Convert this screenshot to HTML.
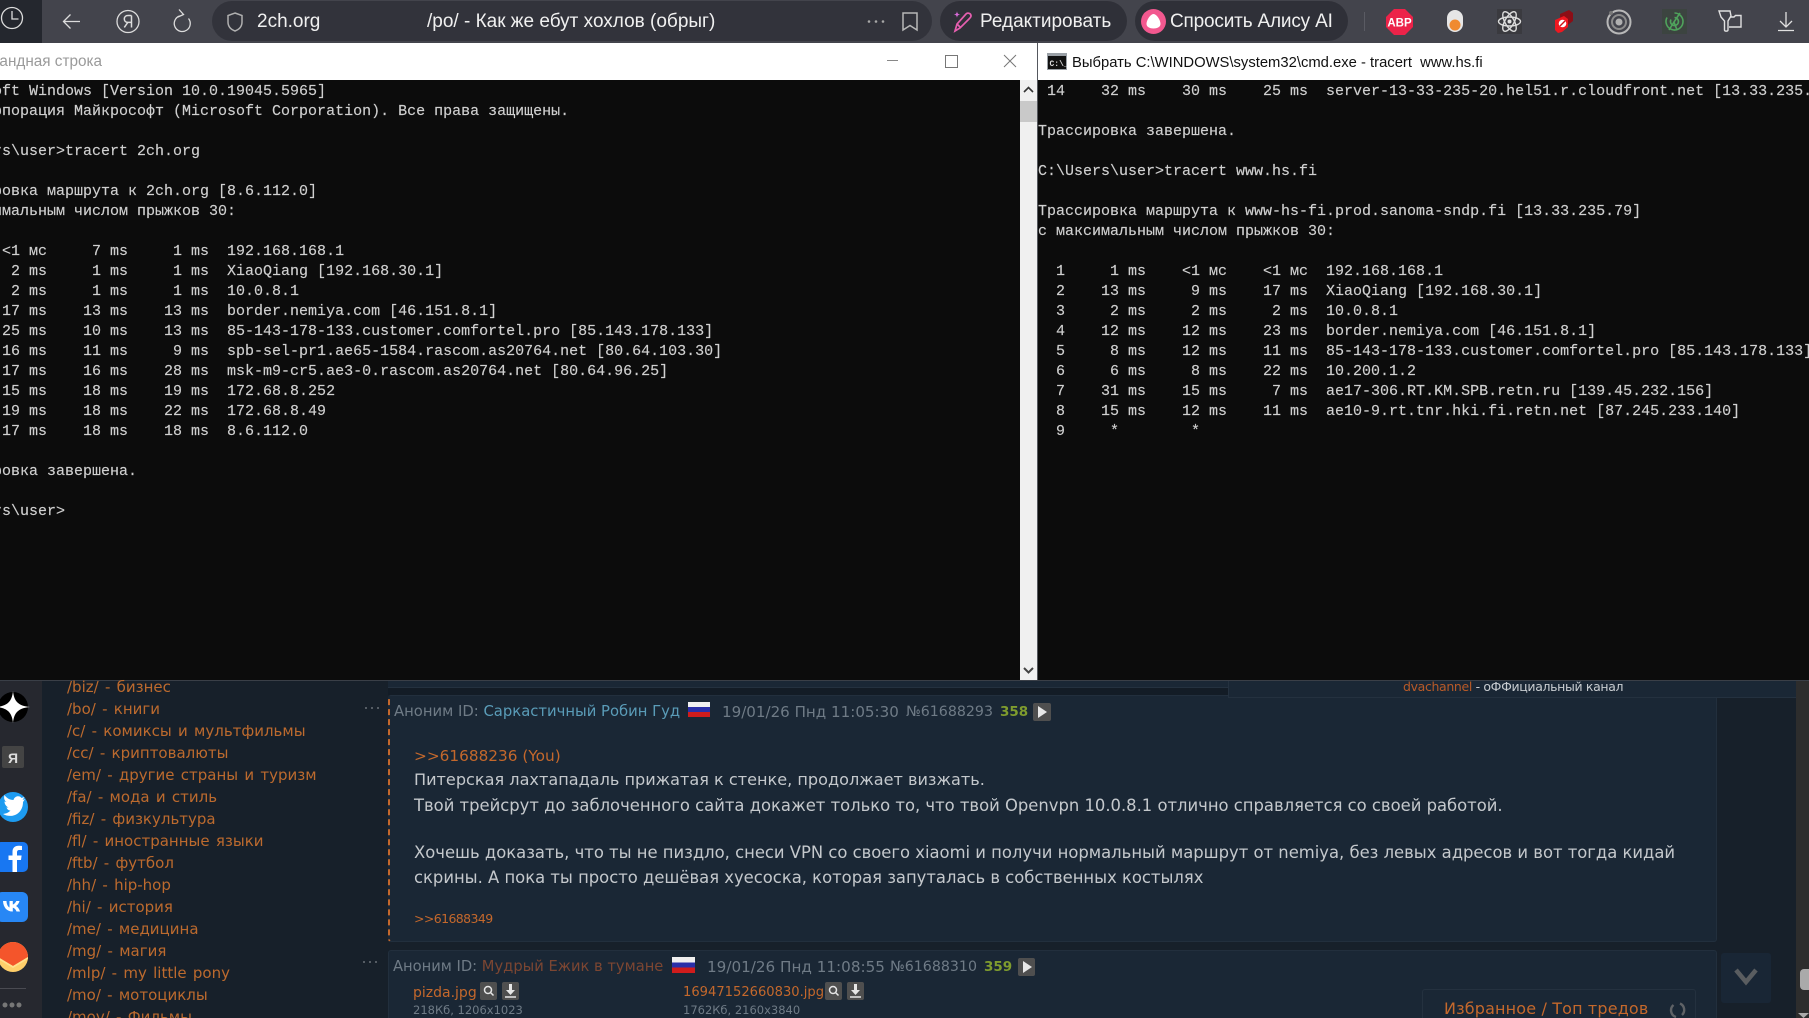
<!DOCTYPE html>
<html lang="ru"><head><meta charset="utf-8"><title>2ch</title>
<style>
html,body{margin:0;padding:0;width:1809px;height:1018px;overflow:hidden;background:#000}
#root{position:relative;width:1809px;height:1018px;overflow:hidden}
.a{position:absolute}
.t{position:absolute;white-space:pre;line-height:20px;height:20px}
#top{position:absolute;left:0;top:0;width:1809px;height:43px;background:#43444c;overflow:hidden}
.ui{font-family:"Liberation Sans",sans-serif;color:#f0f0f0;font-size:19px}
.con{position:absolute;top:2px;margin:0;font:15px/20px "Liberation Mono",monospace;color:#d0d0d0;white-space:pre;-webkit-text-stroke:.15px #d0d0d0}
.b{font-family:"DejaVu Sans",sans-serif;font-size:15px;color:#bc6a2e;word-spacing:1.5px}
.h{font-family:"DejaVu Sans",sans-serif;font-size:14.8px;color:#6f7b86}
.m{font-family:"DejaVu Sans",sans-serif;font-size:16.4px;color:#c4c8cc}
.post{position:absolute;left:388px;width:1329px;background:#1a2735;border:1px solid #222f3d;border-radius:3px;box-sizing:border-box}
.pb{position:absolute;background:#4f4f4f;border-radius:2px}
</style></head><body><div id="root">

<!-- browser bar -->
<div id="top">
 <div class="a" style="left:0;top:0;width:42px;height:43px;background:#24272e"></div>
 <svg class="a" style="left:0;top:0" width="212" height="43" fill="none" stroke="#dcdcdc" stroke-width="1.300">
  <circle cx="12" cy="18" r="10.500"/><path d="M12 11v8h6.500"/>
  <path d="M80 21.500H63.500m7-7l-7 7 7 7"/>
  <circle cx="128" cy="21.500" r="11"/><path d="M131.500 15.500v12m0-12h-3.500c-2.300 0-3.700 1.500-3.700 3.500s1.400 3.400 3.700 3.400h3.500m-3.700 0l-3.500 5" stroke-width="1.500"/>
  <path d="M188.500 18.500a8 8 0 1 1-9-2.500M179 9.500l4.500 5-5.500 2.500"/>
 </svg>
 <div class="a" style="left:212px;top:1px;width:720px;height:40px;border-radius:20px;background:#32333b"></div>
 <svg class="a" style="left:226px;top:11px" width="18" height="22" fill="none" stroke="#b0b0b0" stroke-width="1.500"><path d="M9 2l7 2.500v6.500c0 4.500-3 7.500-7 9-4-1.500-7-4.500-7-9V4.500z"/></svg>
 <div class="t ui" style="left:257px;top:12px">2ch.org</div>
 <div class="t ui" style="left:427px;top:12px">/po/ - Как же ебут хохлов (обрыг)</div>
 <svg class="a" style="left:866px;top:11px" width="56" height="24" fill="none" stroke="#b8b8b8" stroke-width="1.500"><circle cx="3" cy="10.500" r="1.300" fill="#a8a8a8" stroke="none"/><circle cx="10" cy="10.500" r="1.300" fill="#a8a8a8" stroke="none"/><circle cx="17" cy="10.500" r="1.300" fill="#a8a8a8" stroke="none"/><path d="M37 2h14v17l-7-4.500-7 4.500z"/></svg>
 <div class="a" style="left:940px;top:1px;width:187px;height:40px;border-radius:20px;background:#2f3038"></div>
 <svg class="a" style="left:951px;top:9px" width="24" height="26" fill="none" stroke="#e65fb0" stroke-width="1.700"><path d="M4 22l2-7L15 5c1.500-1.500 5-1 5 2 0 1-1 2-2 3l-9 9z"/><path d="M6 15l3 3"/><path d="M6 2c.3 2.500 1 3.300 3.500 3.500C7 5.800 6.300 6.500 6 9 5.700 6.500 5 5.800 2.500 5.500 5 5.300 5.700 4.500 6 2z" fill="#d86ad8" stroke="none"/></svg>
 <div class="t ui" style="left:980px;top:12px">Редактировать</div>
 <div class="a" style="left:1135px;top:1px;width:213px;height:40px;border-radius:20px;background:#2f3038"></div>
 <div class="a" style="left:1141px;top:9px;width:25px;height:25px;border-radius:50%;background:#f2588f"></div>
 <svg class="a" style="left:1145px;top:13px" width="17" height="17"><path d="M8.500 1c3 0 7 6 7 10 0 3-3.500 4.500-7 4.500s-7-1.500-7-4.500c0-4 4-10 7-10z" fill="#fff"/></svg>
 <div class="t ui" style="left:1170px;top:12px;letter-spacing:-.18px">Спросить Алису AI</div>
 <div class="a" style="left:1364px;top:12px;width:1px;height:19px;background:#5a5b63"></div>
 <svg class="a" style="left:1386px;top:9px" width="27" height="26"><path d="M8 0h11l8 8v10l-8 8H8l-8-8V8z" fill="#ec2349"/><text x="13.500" y="17.500" text-anchor="middle" font-family="Liberation Sans" font-weight="700" font-size="11.500" fill="#fff">ABP</text></svg>
 <svg class="a" style="left:1445px;top:9px" width="20" height="24"><rect x="2" y="1" width="16" height="22" rx="8" fill="#e6e6e6"/><circle cx="10" cy="16" r="5.500" fill="#f08a30"/></svg>
 <svg class="a" style="left:1497px;top:9px" width="25" height="25"><rect width="25" height="25" fill="#3a3a3f"/><g fill="none" stroke="#dcdcdc" stroke-width="1.400"><ellipse cx="12.500" cy="12.500" rx="11" ry="4.500"/><ellipse cx="12.500" cy="12.500" rx="11" ry="4.500" transform="rotate(60 12.500 12.500)"/><ellipse cx="12.500" cy="12.500" rx="11" ry="4.500" transform="rotate(120 12.500 12.500)"/></g><circle cx="12.500" cy="12.500" r="2" fill="#e0e0e0"/></svg>
 <svg class="a" style="left:1554px;top:9px" width="20" height="25"><path d="M6 5l9-4 4 3v8l-8 6-5-3z" fill="#8c0e16"/><path d="M1 11l9-4 4 3v8l-6 5-4 1-3-3z" fill="#ef1820"/><circle cx="8.500" cy="14.500" r="3.800" fill="#fff"/><path d="M6 17l5-5" stroke="#d01018" stroke-width="1.400"/></svg>
 <svg class="a" style="left:1606px;top:9px" width="26" height="26" fill="none"><circle cx="13" cy="13" r="11.500" stroke="#b8b8b8" stroke-width="2"/><circle cx="13" cy="13" r="7" stroke="#8c8c8c" stroke-width="2"/><circle cx="13" cy="13" r="3.500" fill="#b0b0b0"/><circle cx="5" cy="4" r="2" fill="#777"/></svg>
 <svg class="a" style="left:1662px;top:9px" width="25" height="25" fill="none"><rect width="25" height="25" fill="#3c4440"/><path d="M12.500 4a8.500 8.500 0 1 1-7.500 4.500M12.500 8.500a4 4 0 1 1-3.500 2M18 4l-6 9 3 8M7 21l5-8" stroke="#4fa35c" stroke-width="1.600"/></svg>
 <svg class="a" style="left:1717px;top:9px" width="26" height="26" fill="none" stroke="#e0e0e0" stroke-width="1.400"><path d="M2 2h11l1 5-3 5v9c0 1.500-3.500 1.500-3.500 0v-9L4 8z"/><path d="M13 8h4l1.500-1.500H24v11.500H12"/></svg>
 <svg class="a" style="left:1776px;top:10px" width="20" height="24" fill="none" stroke="#e0e0e0" stroke-width="1.300"><path d="M10 2v15M4 11l6 6 6-6M2 20.500h16"/></svg>
</div>
<div class="a" style="left:0;top:43px;width:1809px;height:1px;background:#26272c"></div>

<!-- left console -->
<div class="a" style="left:0;top:43px;width:1038px;height:37px;background:#fff"></div>
<div class="t" style="left:-28.500px;top:52px;font:15.300px/20px 'Liberation Sans',sans-serif;color:#9a9a9a">Командная строка</div>
<div class="a" style="left:887px;top:60px;width:11px;height:1px;background:#888"></div>
<div class="a" style="left:945px;top:55px;width:11px;height:11px;border:1px solid #777"></div>
<svg class="a" style="left:1003px;top:54px" width="14" height="14" stroke="#777" stroke-width="1"><path d="M1 1l12 12M13 1L1 13"/></svg>
<div class="a" style="left:0;top:80px;width:1020px;height:600px;background:#0c0c0c;overflow:hidden">
<pre class="con" style="left:-61px">Microsoft Windows [Version 10.0.19045.5965]
(c) Корпорация Майкрософт (Microsoft Corporation). Все права защищены.

C:\Users\user&gt;tracert 2ch.org

Трассировка маршрута к 2ch.org [8.6.112.0]
с максимальным числом прыжков 30:

  1    &lt;1 мс     7 ms     1 ms  192.168.168.1
  2     2 ms     1 ms     1 ms  XiaoQiang [192.168.30.1]
  3     2 ms     1 ms     1 ms  10.0.8.1
  4    17 ms    13 ms    13 ms  border.nemiya.com [46.151.8.1]
  5    25 ms    10 ms    13 ms  85-143-178-133.customer.comfortel.pro [85.143.178.133]
  6    16 ms    11 ms     9 ms  spb-sel-pr1.ae65-1584.rascom.as20764.net [80.64.103.30]
  7    17 ms    16 ms    28 ms  msk-m9-cr5.ae3-0.rascom.as20764.net [80.64.96.25]
  8    15 ms    18 ms    19 ms  172.68.8.252
  9    19 ms    18 ms    22 ms  172.68.8.49
 10    17 ms    18 ms    18 ms  8.6.112.0

Трассировка завершена.

C:\Users\user&gt;</pre>
</div>
<!-- scrollbar -->
<div class="a" style="left:1020px;top:80px;width:17px;height:600px;background:#f0f0f0"></div>
<div class="a" style="left:1020px;top:101px;width:17px;height:21px;background:#c9c9c9"></div>
<svg class="a" style="left:1020px;top:82px" width="17" height="16" fill="none" stroke="#333" stroke-width="1.600"><path d="M4 10l4.500-4.500L13 10"/></svg>
<svg class="a" style="left:1020px;top:662px" width="17" height="16" fill="none" stroke="#444" stroke-width="2"><path d="M4 6l4.500 4.500L13 6"/></svg>

<!-- right console -->
<div class="a" style="left:1037px;top:43px;width:1px;height:637px;background:#55585e"></div>
<div class="a" style="left:1038px;top:43px;width:771px;height:37px;background:#fff"></div>
<svg class="a" style="left:1047px;top:53px" width="20" height="17"><rect width="20" height="17" fill="#9aa0a6"/><rect x="1" y="3" width="18" height="13" fill="#111"/><text x="2.500" y="13" font-family="Liberation Mono" font-size="8" font-weight="700" fill="#ddd">C:\_</text></svg>
<div class="t" style="left:1072px;top:52.500px;font:14.800px/20px 'Liberation Sans',sans-serif;color:#111">Выбрать C:\WINDOWS\system32\cmd.exe - tracert  www.hs.fi</div>
<div class="a" style="left:1038px;top:80px;width:771px;height:600px;background:#0c0c0c;overflow:hidden">
<pre class="con" style="left:0"> 14    32 ms    30 ms    25 ms  server-13-33-235-20.hel51.r.cloudfront.net [13.33.235.20]

Трассировка завершена.

C:\Users\user&gt;tracert www.hs.fi

Трассировка маршрута к www-hs-fi.prod.sanoma-sndp.fi [13.33.235.79]
с максимальным числом прыжков 30:

  1     1 ms    &lt;1 мс    &lt;1 мс  192.168.168.1
  2    13 ms     9 ms    17 ms  XiaoQiang [192.168.30.1]
  3     2 ms     2 ms     2 ms  10.0.8.1
  4    12 ms    12 ms    23 ms  border.nemiya.com [46.151.8.1]
  5     8 ms    12 ms    11 ms  85-143-178-133.customer.comfortel.pro [85.143.178.133]
  6     6 ms     8 ms    22 ms  10.200.1.2
  7    31 ms    15 ms     7 ms  ae17-306.RT.KM.SPB.retn.ru [139.45.232.156]
  8    15 ms    12 ms    11 ms  ae10-9.rt.tnr.hki.fi.retn.net [87.245.233.140]
  9     *        *</pre>
</div>

<!-- bottom page -->
<div class="a" style="left:0;top:680px;width:1809px;height:338px;background:#17202a;overflow:hidden">
 <div class="a" style="left:0;top:0;width:1809px;height:1px;background:#3a3f47"></div>
</div>
<div class="a" style="left:0;top:681px;width:42px;height:337px;background:#26282f"></div>
<svg class="a" style="left:0;top:681px" width="42" height="337">
 <circle cx="13" cy="26" r="15" fill="#000"/><path d="M13 10c1 10 5 15 17 16-12 1-16 6-17 16-1-10-5-15-17-16 12-1 16-6 17-16z" fill="#fff"/>
 <rect x="2" y="65" width="22" height="22" rx="2" fill="#444"/><text x="13" y="82" text-anchor="middle" font-family="Liberation Sans" font-size="14" font-weight="700" fill="#ddd">Я</text>
 <circle cx="13" cy="126" r="15" fill="#1d9bf0"/><path d="M3 133c9 5 20 0 20-12l2-3-2.500 1 2-3-3 1c-2-3-7-2-8 2-4 0-7-2-9-5-1 3 0 6 2 7l-2-.5c0 3 2 5 4 6h-2c1 2 2 3 4 3-2 2-4 3-7.500 3.500z" fill="#fff"/>
 <rect x="-4" y="161" width="32" height="30" rx="5" fill="#1877f2"/><path d="M17 191v-12h4l.6-4.500H17v-3c0-1.500.5-2.500 2.500-2.500H22v-4c-.6 0-2-.2-3.500-.2-3.500 0-6 2-6 6v3.700H8.500V179H12.500v12z" fill="#fff"/>
 <rect x="-4" y="211" width="32" height="30" rx="6" fill="#2787f5"/><path d="M3 220h3.500c.1 4 2 6 3 6.500V220h3.300v3.500c1-.1 2.500-1.500 3.500-3.500h3.200c-.5 2.500-2.500 4.500-3.500 5 1 .5 3 2 4 5.500h-3.500c-.7-2-2.200-3.500-3.700-3.700v3.700h-.4C7 230.500 3.300 226.500 3 220z" fill="#fff"/>
 <circle cx="13" cy="276" r="15" fill="#ffcf6a"/><path d="M-2 276a15 15 0 0 1 30 0l-15 9z" fill="#f4552b"/><path d="M-2 276l15 9 15-9v2l-15 9-15-9z" fill="#ffe08c"/>
 <rect x="0" y="307" width="26" height="1" fill="#4a4b52"/>
 <circle cx="5" cy="324" r="2.500" fill="#777"/><circle cx="12" cy="324" r="2.500" fill="#777"/><circle cx="19" cy="324" r="2.500" fill="#777"/>
</svg>

<!-- board list -->
<div class="t b" style="left:67px;top:677px">/biz/ - бизнес</div>
<div class="t b" style="left:67px;top:699px">/bo/ - книги</div>
<div class="t b" style="left:67px;top:721px">/c/ - комиксы и мультфильмы</div>
<div class="t b" style="left:67px;top:743px">/cc/ - криптовалюты</div>
<div class="t b" style="left:67px;top:765px">/em/ - другие страны и туризм</div>
<div class="t b" style="left:67px;top:787px">/fa/ - мода и стиль</div>
<div class="t b" style="left:67px;top:809px">/fiz/ - физкультура</div>
<div class="t b" style="left:67px;top:831px">/fl/ - иностранные языки</div>
<div class="t b" style="left:67px;top:853px">/ftb/ - футбол</div>
<div class="t b" style="left:67px;top:875px">/hh/ - hip-hop</div>
<div class="t b" style="left:67px;top:897px">/hi/ - история</div>
<div class="t b" style="left:67px;top:919px">/me/ - медицина</div>
<div class="t b" style="left:67px;top:941px">/mg/ - магия</div>
<div class="t b" style="left:67px;top:963px">/mlp/ - my little pony</div>
<div class="t b" style="left:67px;top:985px">/mo/ - мотоциклы</div>
<div class="t b" style="left:67px;top:1007px">/mov/ - Фильмы</div>

<!-- top strip -->
<div class="a" style="left:388px;top:681px;width:841px;height:6px;background:#1a2735;border-bottom:1px solid #24313f"></div>
<div class="a" style="left:388px;top:688px;width:841px;height:7px;background:#131c26"></div>
<div class="a" style="left:1228px;top:681px;width:568px;height:17px;background:#1a2735;border-left:1px solid #24313f;border-bottom:1px solid #24313f;box-sizing:border-box;z-index:3"></div>
<div class="t" style="left:1403px;top:677px;font:12.500px/20px 'DejaVu Sans',sans-serif;color:#b85a28;z-index:4;letter-spacing:-.35px">dvachannel <span style="color:#c8ccd0">- оФФициальный канал</span></div>

<!-- post 1 -->
<div class="post" style="top:695px;height:247px;border-left:2px dashed #c4682c"></div>
<div class="a" style="left:365px;top:707px;width:16px;height:2px;background:repeating-linear-gradient(90deg,#555c64 0 2px,transparent 2px 6px)"></div>
<div class="t h" style="left:394px;top:702px">Аноним ID: <span style="color:#5a9cb8">Саркастичный Робин Гуд</span></div>
<div class="a" style="left:688px;top:702px;width:22px;height:15px;background:linear-gradient(#f0f0f0 0 33%,#2a2fa8 33% 66%,#d01c1c 66%)"></div>
<div class="t h" style="left:722px;top:702px;font-size:15.100px">19/01/26 Пнд 11:05:30</div>
<div class="t h" style="left:906px;top:702px;font-size:14.200px">№61688293</div>
<div class="t h" style="left:1000px;top:702px;color:#7f9c2e;font-size:13.500px;font-weight:700">358</div>
<div class="pb" style="left:1033px;top:703px;width:18px;height:18px"></div>
<svg class="a" style="left:1033px;top:703px" width="18" height="18"><path d="M5 3l9 6-9 6z" fill="#e8e8e8"/></svg>
<div class="t m" style="left:414px;top:746px;color:#c4682c;font-size:15.300px">&gt;&gt;61688236 (You)</div>
<div class="t m" style="left:414px;top:770px;font-size:16.100px">Питерская лахтападаль прижатая к стенке, продолжает визжать.</div>
<div class="t m" style="left:414px;top:796px">Твой трейсрут до заблоченного сайта докажет только то, что твой Openvpn 10.0.8.1 отлично справляется со своей работой.</div>
<div class="t m" style="left:414px;top:843px">Хочешь доказать, что ты не пиздло, снеси VPN со своего xiaomi и получи нормальный маршрут от nemiya, без левых адресов и вот тогда кидай</div>
<div class="t m" style="left:414px;top:868px">скрины. А пока ты просто дешёвая хуесоска, которая запуталась в собственных костылях</div>
<div class="t h" style="left:414px;top:909px;color:#c4682c;font-size:12.500px;letter-spacing:-.6px">&gt;&gt;61688349</div>

<!-- post 2 -->
<div class="post" style="top:950px;height:80px"></div>
<div class="a" style="left:363px;top:961px;width:17px;height:2px;background:repeating-linear-gradient(90deg,#555c64 0 2px,transparent 2px 6px)"></div>
<div class="t h" style="left:393px;top:957px;font-size:14.700px">Аноним ID: <span style="color:#7c4632">Мудрый Ежик в тумане</span></div>
<div class="a" style="left:672px;top:957px;width:23px;height:16px;background:linear-gradient(#f0f0f0 0 33%,#2a2fa8 33% 66%,#d01c1c 66%)"></div>
<div class="t h" style="left:707px;top:957px;font-size:15.200px">19/01/26 Пнд 11:08:55</div>
<div class="t h" style="left:890px;top:957px;font-size:14.200px">№61688310</div>
<div class="t h" style="left:984px;top:957px;color:#7f9c2e;font-size:13.500px;font-weight:700">359</div>
<div class="pb" style="left:1018px;top:958px;width:17px;height:18px"></div>
<svg class="a" style="left:1018px;top:958px" width="17" height="18"><path d="M5 3l9 6-9 6z" fill="#e8e8e8"/></svg>
<div class="t h" style="left:413px;top:983px;color:#c4682c;font-size:14px">pizda.jpg</div>
<div class="pb" style="left:480px;top:982px;width:17px;height:18px"></div>
<div class="pb" style="left:502px;top:982px;width:17px;height:18px"></div>
<svg class="a" style="left:480px;top:982px" width="39" height="18" fill="none" stroke="#e6e6e6" stroke-width="1.500"><circle cx="8" cy="8" r="3.500"/><path d="M10.500 10.500l3 3"/><path d="M30.500 2v8" stroke-width="3"/><path d="M26 8h9l-4.500 5z" fill="#e6e6e6" stroke="none"/><path d="M25 15h11"/></svg>
<div class="t h" style="left:413px;top:1000px;font-size:11.500px">218Кб, 1206x1023</div>
<div class="t h" style="left:683px;top:983px;color:#c4682c;font-size:13.100px">16947152660830.jpg</div>
<div class="pb" style="left:825px;top:982px;width:17px;height:18px"></div>
<div class="pb" style="left:847px;top:982px;width:17px;height:18px"></div>
<svg class="a" style="left:825px;top:982px" width="39" height="18" fill="none" stroke="#e6e6e6" stroke-width="1.500"><circle cx="8" cy="8" r="3.500"/><path d="M10.500 10.500l3 3"/><path d="M30.500 2v8" stroke-width="3"/><path d="M26 8h9l-4.500 5z" fill="#e6e6e6" stroke="none"/><path d="M25 15h11"/></svg>
<div class="t h" style="left:683px;top:1000px;font-size:11.500px">1762Кб, 2160x3840</div>

<!-- right column -->
<div class="a" style="left:1721px;top:953px;width:50px;height:50px;background:#192635;border-radius:3px"></div>
<svg class="a" style="left:1733px;top:966px" width="26" height="22" fill="none" stroke="#5a5d60" stroke-width="4.500"><path d="M3 4l10 12L23 4"/></svg>
<div class="a" style="left:1422px;top:989px;width:274px;height:40px;background:#1a2735;border:1px solid #24313f;border-radius:3px;box-sizing:border-box"></div>
<div class="t" style="left:1444px;top:999px;font:16px/20px 'DejaVu Sans',sans-serif;color:#c4682c;letter-spacing:.15px">Избранное / Топ тредов</div>
<svg class="a" style="left:1669px;top:1002px" width="18" height="16" fill="none" stroke="#5f6266" stroke-width="2.400"><path d="M11 1.500A7 7 0 0 1 13 13"/><path d="M7 15A7 7 0 0 1 4.500 3"/></svg>
<div class="a" style="left:1796px;top:681px;width:13px;height:337px;background:#2d2d2d"></div>
<div class="a" style="left:1800px;top:969px;width:9px;height:21px;background:#aaa;border-radius:4px 0 0 4px"></div>
<svg class="a" style="left:1798px;top:1013px" width="11" height="5"><path d="M0 0h11L5.500 5z" fill="#aaa"/></svg>
</div></body></html>
